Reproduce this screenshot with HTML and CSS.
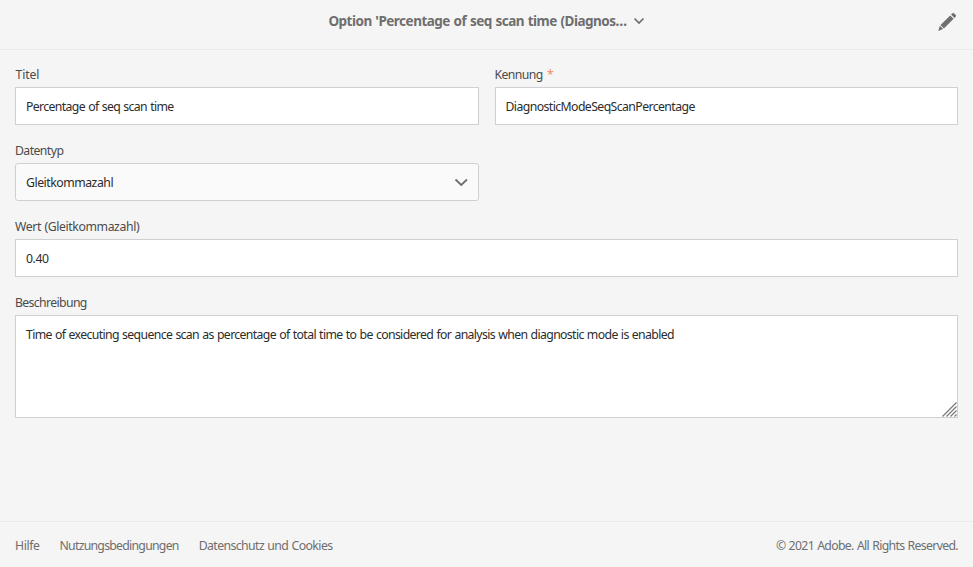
FILE: index.html
```html
<!DOCTYPE html>
<html lang="de">
<head>
<meta charset="utf-8">
<title>Option</title>
<link rel="stylesheet" href="styles.css">
</head>
<body>
<header class="topbar">
  <h1 class="topbar-title">Option 'Percentage of seq scan time (Diagnos…</h1>
  <svg class="topbar-chevron" width="12" height="8" viewBox="0 0 12 8"><path d="M1.500 1.500 6 6l4.500-4.500"/></svg>
  <svg class="edit-icon" width="20" height="20" viewBox="0 0 20 20">
    <path d="M13.200 3.400 16.600 6.800 6.900 16.400 3.500 13z"/>
    <path d="M14.100 2.500 15.500 1.200Q16.300.600 17 1.300L18.700 3Q19.400 3.700 18.800 4.500L17.500 5.900z"/>
    <path d="M2.900 13.800 6.100 17 1.200 18.900z"/>
  </svg>
</header>
<main class="form">
  <div class="field">
    <label class="label t-titel" for="title">Titel</label>
    <input class="input" id="title" value="Percentage of seq scan time">
  </div>
  <div class="field">
    <label class="label t-kennung" for="key">Kennung <span class="required">*</span></label>
    <input class="input t-key" id="key" value="DiagnosticModeSeqScanPercentage">
  </div>
  <div class="field">
    <span class="label t-type">Datentyp</span>
    <button class="input select" type="button"><span>Gleitkommazahl</span>
      <svg width="14" height="9" viewBox="0 0 14 9"><path d="M1.500 1.500 7.250 7l5.750-5.500"/></svg>
    </button>
  </div>
  <div class="field wide">
    <label class="label t-wert" for="value">Wert (Gleitkommazahl)</label>
    <input class="input t-value" id="value" value="0.40">
  </div>
  <div class="field wide">
    <label class="label" for="description">Beschreibung</label>
    <div class="area">
      <textarea class="input textarea" id="description">Time of executing sequence scan as percentage of total time to be considered for analysis when diagnostic mode is enabled</textarea>
      <svg class="grip" width="15" height="15" viewBox="0 0 15 15"><path d="M.5 14.500 14.500.5M4.500 14.500l10-10M8.500 14.500l6-6M12.500 14.500l2-2"/></svg>
    </div>
  </div>
</main>
<footer class="footer">
  <nav class="links">
    <a class="t-hilfe">Hilfe</a>
    <a class="t-terms">Nutzungsbedingungen</a>
    <a class="t-privacy">Datenschutz und Cookies</a>
  </nav>
  <span class="t-copy">© 2021 Adobe. All Rights Reserved.</span>
</footer>
</body>
</html>
```
FILE: styles.css
```css
* { box-sizing: border-box; }
body {
  margin: 0;
  height: 567px;
  display: flex;
  flex-direction: column;
  overflow: hidden;
  background: #f5f5f5;
  color: #4b4b4b;
  font: 12.25px/18px "Noto Sans", sans-serif;
  letter-spacing: -0.63px;
  word-spacing: 0.65px;
}
svg { display: block; fill: none; stroke: #6e6e6e; stroke-width: 2; }
.topbar {
  position: relative;
  height: 50px;
  display: flex;
  justify-content: center;
  align-items: flex-start;
  gap: 6px;
  padding: 11px 0 0 0;
  border-bottom: 1px solid #e9e9e9;
}
.topbar-title {
  margin: 0;
  color: #6e6e6e;
  font-size: 13.5px;
  line-height: 20px;
  letter-spacing: -0.51px;
  word-spacing: 0.7px;
}
.topbar-chevron { margin-top: 6px; stroke-width: 1.7; }
.edit-icon {
  position: absolute;
  top: 12px;
  right: 16px;
  fill: #6e6e6e;
  stroke: none;
}
.form {
  flex: 1;
  display: grid;
  grid-template-columns: 1fr 1fr;
  align-content: start;
  gap: 14px 16px;
  padding: 13px 15px 0;
}
.field { display: flex; flex-direction: column; }
.wide { grid-column: 1 / -1; }
.label { height: 24px; padding-top: 3px; }
.required { color: #f29068; margin-left: 1px; }
.input {
  width: 100%;
  height: 38px;
  margin: 0;
  padding: 0 10px;
  border: 1px solid #d0d0d0;
  border-radius: 0;
  background: #fff;
  color: #2c2c2c;
  font: inherit;
  letter-spacing: inherit;
  word-spacing: inherit;
  outline: none;
}
.select {
  display: flex;
  justify-content: space-between;
  align-items: center;
  border-radius: 3px;
  background: #fafafa;
  letter-spacing: -0.47px;
}
.select span { padding-top: 1px; }
.select svg { stroke-width: 1.8; }
.area { position: relative; }
.textarea {
  display: block;
  height: 103px;
  padding-top: 9px;
  line-height: 19px;
  resize: none;
  overflow: hidden;
}
.grip {
  position: absolute;
  right: 1.5px;
  bottom: 1.5px;
  stroke: #777;
  stroke-width: 1.2;
}
.footer {
  height: 46px;
  display: flex;
  justify-content: space-between;
  padding: 15px 15px 0;
  border-top: 1px solid #e9e9e9;
  color: #6e6e6e;
}
.links { display: flex; gap: 20px; }
.t-titel { letter-spacing: -0.15px; padding-left: 0.5px; }
.t-kennung { letter-spacing: -0.57px; }
.t-type { letter-spacing: -0.57px; }
.t-key { letter-spacing: -0.58px; }
.t-wert { letter-spacing: -0.39px; }
.t-value { letter-spacing: -0.4px; }
.t-hilfe { letter-spacing: -0.4px; }
.t-terms { letter-spacing: -0.73px; }
.t-privacy { letter-spacing: -0.58px; }
.t-copy { letter-spacing: -0.66px; }
```
